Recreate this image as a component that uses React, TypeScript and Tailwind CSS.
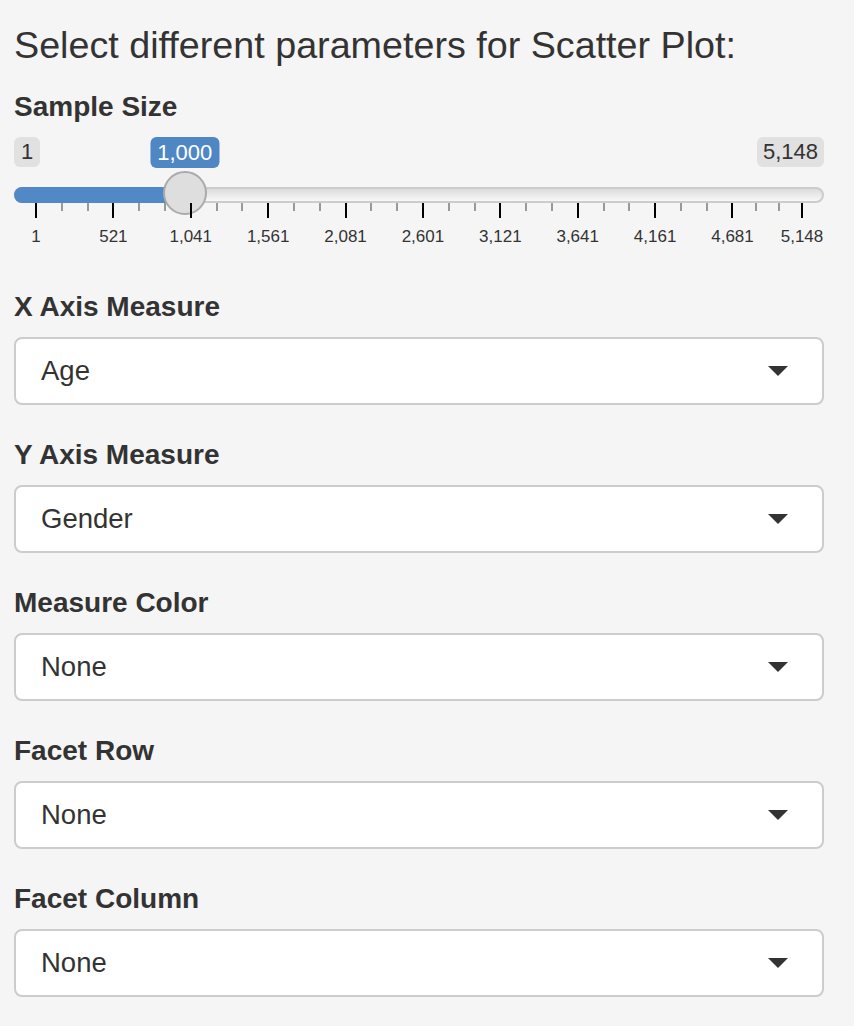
import React from 'react';

const MIN = 1;
const MAX = 5148;
const VALUE = 1000;
const TRACK_W = 810;
const PAD = 22; // half of handle width

const xOf = (v: number) => PAD + ((v - MIN) / (MAX - MIN)) * (TRACK_W - PAD * 2);

const majors = [1, 521, 1041, 1561, 2081, 2601, 3121, 3641, 4161, 4681, 5148];

const fmt = (n: number) => n.toLocaleString('en-US');

function Caret() {
  return (
    <svg width="20" height="10" viewBox="0 0 20 10" className="shrink-0">
      <path d="M0 0 L20 0 L10 10 Z" fill="#333333" />
    </svg>
  );
}

function SelectField({ label, value }: { label: string; value: string }) {
  return (
    <div className="flex flex-col gap-[10px]">
      <div className="text-[28px] leading-[40px] font-bold text-[#333333]">{label}</div>
      <div className="h-[68px] bg-white border-2 border-[#cccccc] rounded-[8px] flex items-center justify-between pl-[25px] pr-[34px]">
        <span className="text-[27.5px] text-[#333333]">{value}</span>
        <Caret />
      </div>
    </div>
  );
}

function RangeSlider() {
  const handleX = xOf(VALUE);
  const minorTicks: number[] = [];
  for (let i = 0; i < majors.length - 1; i++) {
    const a = xOf(majors[i]);
    const b = xOf(majors[i + 1]);
    minorTicks.push(a + (b - a) / 3, a + ((b - a) * 2) / 3);
  }

  return (
    <div className="flex flex-col pt-[10px]">
      {/* min / max labels, current value floats above the handle */}
      <div className="relative flex justify-between items-start h-[31px] text-[22px] text-[#333333]">
        <span className="h-[30px] px-[7px] rounded-[6px] bg-[#e1e1e1] leading-[30px]">1</span>
        <span className="h-[30px] px-[6px] rounded-[6px] bg-[#e1e1e1] leading-[30px]">5,148</span>
        <span
          className="absolute top-0 h-[31px] px-[7px] rounded-[6px] bg-[#4f87c5] leading-[31px] text-white -translate-x-1/2"
          style={{ left: handleX }}
        >
          {fmt(VALUE)}
        </span>
      </div>

      {/* track + handle */}
      <div className="relative mt-[19px] h-[16px]">
        <div className="h-full rounded-full border-2 border-[#cccccc] bg-[linear-gradient(to_bottom,#dcdcdc,#f8f8f8)]" />
        <div
          className="absolute left-0 top-0 h-full rounded-l-full bg-[#5189c7]"
          style={{ width: handleX }}
        />
        <div
          className="absolute top-[-16px] w-[44px] h-[44px] rounded-full bg-[#dedede] border-2 border-[#aaaaaa] -translate-x-1/2"
          style={{ left: handleX }}
        />
      </div>

      {/* grid */}
      <div className="relative h-[54px]">
        {minorTicks.map((x, i) => (
          <div
            key={`m${i}`}
            className="absolute top-0 w-[2px] h-[8px] bg-[#999999] -translate-x-1/2"
            style={{ left: x }}
          />
        ))}
        {majors.map((v) => (
          <React.Fragment key={v}>
            <div
              className="absolute top-0 w-[2px] h-[15px] bg-black -translate-x-1/2"
              style={{ left: xOf(v) }}
            />
            <div
              className="absolute top-[24px] text-[17px] leading-[20px] text-[#333333] -translate-x-1/2 whitespace-nowrap"
              style={{ left: xOf(v) }}
            >
              {fmt(v)}
            </div>
          </React.Fragment>
        ))}
      </div>
    </div>
  );
}

export default function App() {
  return (
    <div className="min-h-screen bg-[#f5f5f5] pl-[14px] pr-[30px] pt-[24px] font-['Liberation_Sans',Arial,sans-serif] text-[#333333]">
      <h4 className="text-[37.7px] leading-[43px] font-normal mb-[20px]">
        Select different parameters for Scatter Plot:
      </h4>
      <div className="flex flex-col gap-[30px]">
        <div className="flex flex-col">
          <div className="text-[28px] leading-[40px] font-bold">Sample Size</div>
          <RangeSlider />
        </div>
        <SelectField label="X Axis Measure" value="Age" />
        <SelectField label="Y Axis Measure" value="Gender" />
        <SelectField label="Measure Color" value="None" />
        <SelectField label="Facet Row" value="None" />
        <SelectField label="Facet Column" value="None" />
      </div>
    </div>
  );
}
